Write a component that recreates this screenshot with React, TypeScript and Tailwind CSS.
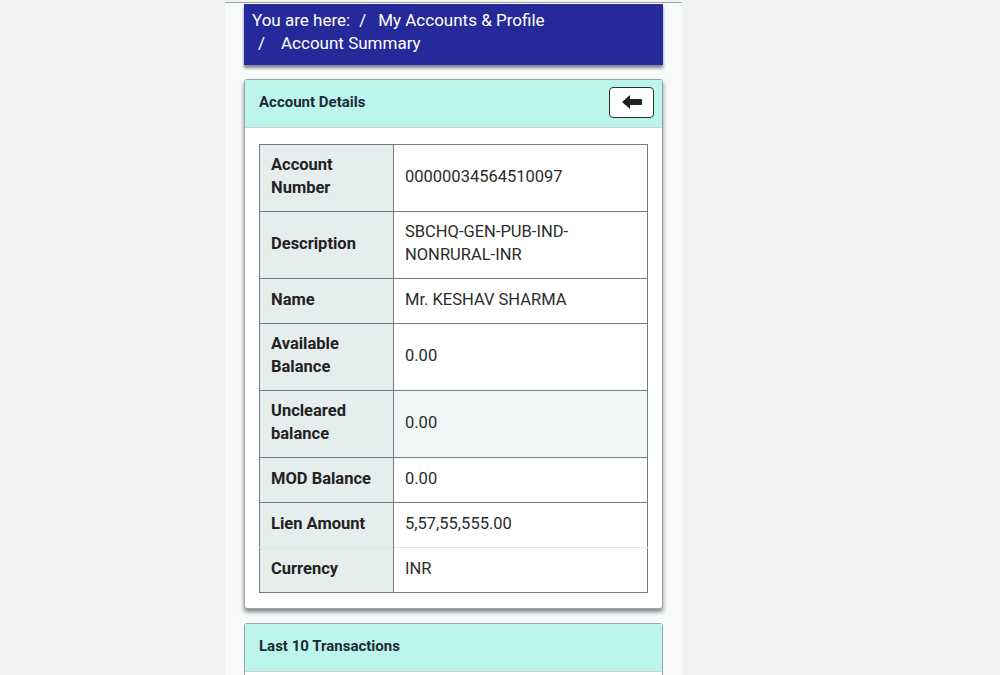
type Row = { label: string[]; value: string[]; shaded?: boolean; soft?: boolean };

const rows: Row[] = [
  { label: ['Account', 'Number'], value: ['00000034564510097'] },
  { label: ['Description'], value: ['SBCHQ-GEN-PUB-IND-', 'NONRURAL-INR'] },
  { label: ['Name'], value: ['Mr. KESHAV SHARMA'] },
  { label: ['Available', 'Balance'], value: ['0.00'] },
  { label: ['Uncleared', 'balance'], value: ['0.00'], shaded: true },
  { label: ['MOD Balance'], value: ['0.00'] },
  { label: ['Lien Amount'], value: ['5,57,55,555.00'] },
  { label: ['Currency'], value: ['INR'], soft: true },
];

function BackArrow() {
  return (
    <svg width="20" height="14" viewBox="0 0 20 14" aria-hidden>
      <path d="M0 7 L8 0 L8 4 L19 4 Q20 4 20 5 L20 9 Q20 10 19 10 L8 10 L8 14 Z" fill="#1f2326" />
    </svg>
  );
}

export default function App() {
  return (
    <div className="flex min-h-screen bg-[#f1f2f2] font-['Roboto',sans-serif]">
      <div className="ml-[225px] mt-[2px] w-[457px] border-t border-[#9aa3a3] bg-[#f8fafa] px-[19px] pt-[1px]">
        {/* breadcrumb */}
        <div className="h-[61px] bg-[#25299a] px-[8px] pt-[5px] text-[17px] leading-[23px] text-white shadow-[0_3px_3px_rgba(40,50,60,0.6)]">
          <div>
            You are here:<span className="mx-[9px]">/</span>
            <span className="ml-[3px]">My Accounts &amp; Profile</span>
          </div>
          <div className="pl-[6px]">
            /<span className="ml-[16px]">Account Summary</span>
          </div>
        </div>

        {/* account details card */}
        <div className="mt-[14px] rounded-[3px] border border-[#9aa5a5] bg-white shadow-[0_3px_4px_rgba(30,40,50,0.55)]">
          <div className="flex h-[48px] items-center justify-between border-b border-[#c8d6d4] bg-[#bcf5eb] pb-[3px] pl-[14px] pr-[8px]">
            <span className="text-[15px] font-bold text-[#1c2a38]">Account Details</span>
            <button className="flex h-[31px] w-[45px] items-center justify-center rounded-[4px] border border-[#2a3236] bg-white">
              <BackArrow />
            </button>
          </div>
          <div className="px-[14px] pb-[15px] pt-[16px]">
            <table className="w-full border-collapse border border-[#6f7f80] text-[16.5px] leading-[23px]">
              <tbody>
                {rows.map((r) => (
                  <tr
                    key={r.label.join(' ')}
                    className={`${r.label.length === 1 && r.value.length === 1 ? 'h-[45px]' : ''} ${r.soft ? 'border-t border-[#dfe6e6]' : 'border-t border-[#6f7f80]'}`}
                  >
                    <td className="w-[134px] border-r border-[#6f7f80] bg-[#e5eded] px-[11px] pb-[12px] pt-[8px] align-middle font-bold text-[#222]">
                      {r.label.map((l) => (
                        <div key={l}>{l}</div>
                      ))}
                    </td>
                    <td className={`px-[11px] pb-[12px] pt-[8px] align-middle text-[#2c2c2c] ${r.shaded ? 'bg-[#f3f6f6]' : 'bg-white'}`}>
                      {r.value.map((v) => (
                        <div key={v}>{v}</div>
                      ))}
                    </td>
                  </tr>
                ))}
              </tbody>
            </table>
          </div>
        </div>

        {/* last transactions card */}
        <div className="mt-[14px] rounded-[3px] border border-[#9aa5a5] bg-white">
          <div className="flex h-[48px] items-center border-b border-[#c8d6d4] bg-[#bcf5eb] pb-[3px] pl-[14px]">
            <span className="text-[15px] font-bold text-[#1c2a38]">Last 10 Transactions</span>
          </div>
          <div className="h-[40px]" />
        </div>
      </div>
    </div>
  );
}
